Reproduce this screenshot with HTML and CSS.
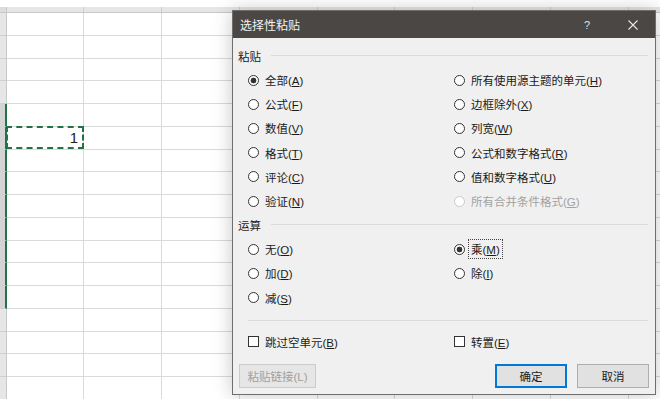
FILE: index.html
```html
<!DOCTYPE html>
<html lang="zh-CN">
<head>
    <meta charset="UTF-8">
    <title>选择性粘贴</title>
    <link rel="stylesheet" href="styles.css">
</head>
<body>
    <div class="sheet">
        <div class="col-head"><div class="corner"></div><div class="heads"></div></div>
        <div class="row"><div class="rh"></div><div class="cells"></div></div>
        <div class="row"><div class="rh"></div><div class="cells"></div></div>
        <div class="row"><div class="rh"></div><div class="cells"></div></div>
        <div class="row"><div class="rh"></div><div class="cells"></div></div>
        <div class="row sel"><div class="rh"></div><div class="cells"></div></div>
        <div class="row sel"><div class="rh"></div><div class="cells"><div class="marquee">1</div></div></div>
        <div class="row sel"><div class="rh"></div><div class="cells"></div></div>
        <div class="row sel"><div class="rh"></div><div class="cells"></div></div>
        <div class="row sel"><div class="rh"></div><div class="cells"></div></div>
        <div class="row sel"><div class="rh"></div><div class="cells"></div></div>
        <div class="row sel"><div class="rh"></div><div class="cells"></div></div>
        <div class="row sel"><div class="rh"></div><div class="cells"></div></div>
        <div class="row sel"><div class="rh"></div><div class="cells"></div></div>
        <div class="row"><div class="rh"></div><div class="cells"></div></div>
        <div class="row"><div class="rh"></div><div class="cells"></div></div>
        <div class="row"><div class="rh"></div><div class="cells"></div></div>
        <div class="row"><div class="rh"></div><div class="cells"></div></div>
    </div>

    <!-- Paste Special dialog -->
    <div class="dialog">
        <div class="title-bar">
            <span class="title">选择性粘贴</span>
            <span class="help">?</span>
            <span class="close">
                <svg width="10" height="10" viewBox="0 0 10 10"><path d="M0.5 0.5L9.5 9.5M9.5 0.5L0.5 9.5" stroke="#e8e8e8" stroke-width="1.1" fill="none"/></svg>
            </span>
        </div>
        <div class="dialog-body">
            <div class="group-title">粘贴</div>
            <div class="options">
                <label class="opt"><input type="radio" name="paste" checked><span>全部(<u>A</u>)</span></label>
                <label class="opt"><input type="radio" name="paste"><span>所有使用源主题的单元(<u>H</u>)</span></label>
                <label class="opt"><input type="radio" name="paste"><span>公式(<u>F</u>)</span></label>
                <label class="opt"><input type="radio" name="paste"><span>边框除外(<u>X</u>)</span></label>
                <label class="opt"><input type="radio" name="paste"><span>数值(<u>V</u>)</span></label>
                <label class="opt"><input type="radio" name="paste"><span>列宽(<u>W</u>)</span></label>
                <label class="opt"><input type="radio" name="paste"><span>格式(<u>T</u>)</span></label>
                <label class="opt"><input type="radio" name="paste"><span>公式和数字格式(<u>R</u>)</span></label>
                <label class="opt"><input type="radio" name="paste"><span>评论(<u>C</u>)</span></label>
                <label class="opt"><input type="radio" name="paste"><span>值和数字格式(<u>U</u>)</span></label>
                <label class="opt"><input type="radio" name="paste"><span>验证(<u>N</u>)</span></label>
                <label class="opt disabled"><input type="radio" name="paste" disabled><span>所有合并条件格式(<u>G</u>)</span></label>
            </div>

            <div class="group-title">运算</div>
            <div class="options">
                <label class="opt"><input type="radio" name="op"><span>无(<u>O</u>)</span></label>
                <label class="opt"><input type="radio" name="op" checked><span class="focus">乘(<u>M</u>)</span></label>
                <label class="opt"><input type="radio" name="op"><span>加(<u>D</u>)</span></label>
                <label class="opt"><input type="radio" name="op"><span>除(<u>I</u>)</span></label>
                <label class="opt"><input type="radio" name="op"><span>减(<u>S</u>)</span></label>
            </div>

            <div class="divider"></div>

            <div class="options checks">
                <label class="opt"><input type="checkbox"><span>跳过空单元(<u>B</u>)</span></label>
                <label class="opt"><input type="checkbox"><span>转置(<u>E</u>)</span></label>
            </div>

            <div class="buttons">
                <button class="btn" disabled>粘贴链接(L)</button>
                <button class="btn primary">确定</button>
                <button class="btn">取消</button>
            </div>
        </div>
    </div>
</body>
</html>
```

FILE: styles.css
```css
* {
    margin: 0;
    padding: 0;
    box-sizing: border-box;
}

:root {
    --grid: #dadada;
    --green: #217346;
    --text: #1b1b1b;
    --panel: #f0f0f0;
}

body {
    width: 660px;
    height: 399px;
    overflow: hidden;
    background: #fff;
    position: relative;
    font-family: "Liberation Sans", "Noto Sans CJK SC", sans-serif;
    font-size: 11.5px;
    color: var(--text);
}

/* Spreadsheet behind the dialog */
.sheet {
    padding-top: 7px;
}

.col-head {
    display: flex;
    height: 6px;
    background: #e6e6e6;
    border-bottom: 1px solid #c8c8c8;
}

.corner {
    width: 7px;
    border-right: 1px solid #c8c8c8;
    background: #dcdcdc;
}

.heads {
    flex: 1;
    background: repeating-linear-gradient(to right, transparent 0 76.9px, #cfcfcf 76.9px 77.9px);
    background-position: -1px 0;
}

.row {
    display: flex;
    height: 22.75px;
}

.rh {
    width: 7px;
    background: #e6e6e6;
    border-right: 1px solid #c8c8c8;
    border-bottom: 1px solid #cfcfcf;
}

.row.sel .rh {
    background: #d4d4d4;
    border-right: 2px solid var(--green);
}

.cells {
    flex: 1;
    border-bottom: 1px solid var(--grid);
    background: repeating-linear-gradient(to right, transparent 0 76.9px, var(--grid) 76.9px 77.9px);
    background-position: -1px 0;
}

.marquee {
    width: 78px;
    height: 23px;
    margin-left: -1px;
    margin-top: -1px;
    border: 2px dashed var(--green);
    font-size: 15px;
    line-height: 19px;
    text-align: right;
    padding-right: 4px;
    color: #222;
}

/* Dialog */
.dialog {
    position: absolute;
    left: 232px;
    top: 10px;
    width: 424px;
    height: 385px;
    border: 1px solid #6e6e6e;
    background: var(--panel);
    box-shadow: 0 0 18px rgba(0, 0, 0, 0.22);
}

.title-bar {
    height: 27px;
    background: #4a4744;
    color: #f2f2f2;
    display: flex;
    align-items: center;
    padding-left: 7px;
}

.title {
    font-size: 12px;
    flex: 1;
}

.help {
    font-size: 11px;
    color: #e0e0e0;
    margin-right: 38px;
}

.close {
    display: flex;
    margin-right: 17px;
}

.dialog-body {
    padding-top: 6px;
}

.group-title {
    height: 24px;
    display: flex;
    align-items: center;
    padding-left: 5px;
    padding-right: 7px;
}

.group-title::after {
    content: "";
    flex: 1;
    height: 1px;
    background: #dcdcdc;
    margin-left: 10px;
    margin-top: -2px;
}

.options {
    display: grid;
    grid-template-columns: 206px 1fr;
    grid-auto-rows: 24.2px;
    padding-left: 15px;
}

.opt {
    display: flex;
    align-items: center;
    gap: 6px;
    white-space: nowrap;
}

.opt u {
    text-underline-offset: 1px;
}

.opt input {
    appearance: none;
    width: 11px;
    height: 11px;
    margin: 0;
    border: 1px solid #333;
    background: #fff;
    flex: none;
}

.opt input[type="radio"] {
    border-radius: 50%;
}

.opt input[type="radio"]:checked {
    background: radial-gradient(circle, #333 0 2.6px, #fff 3.2px);
}

.opt.disabled {
    color: #a2a2a2;
}

.opt.disabled input {
    border-color: #cacaca;
}

.focus {
    outline: 1px dotted #444;
    padding: 1px 2px;
    margin-left: -2px;
}

.divider {
    height: 1px;
    background: #dcdcdc;
    margin: 10px 7px 0 15px;
}

.checks {
    margin-top: 11px;
    grid-auto-rows: 20px;
}

.buttons {
    display: flex;
    gap: 10px;
    margin-top: 12px;
    padding: 0 6px;
}

.btn {
    height: 24px;
    width: 72px;
    border: 1px solid #adadad;
    background: #e1e1e1;
    font-family: inherit;
    font-size: 11.5px;
    color: var(--text);
}

.btn:disabled {
    width: 77px;
    color: #a0a0a0;
    border-color: #cccccc;
    background: #e6e6e6;
}

.btn.primary {
    margin-left: auto;
    border-color: #0078d7;
    box-shadow: inset 0 0 0 1px #0078d7;
}
```
